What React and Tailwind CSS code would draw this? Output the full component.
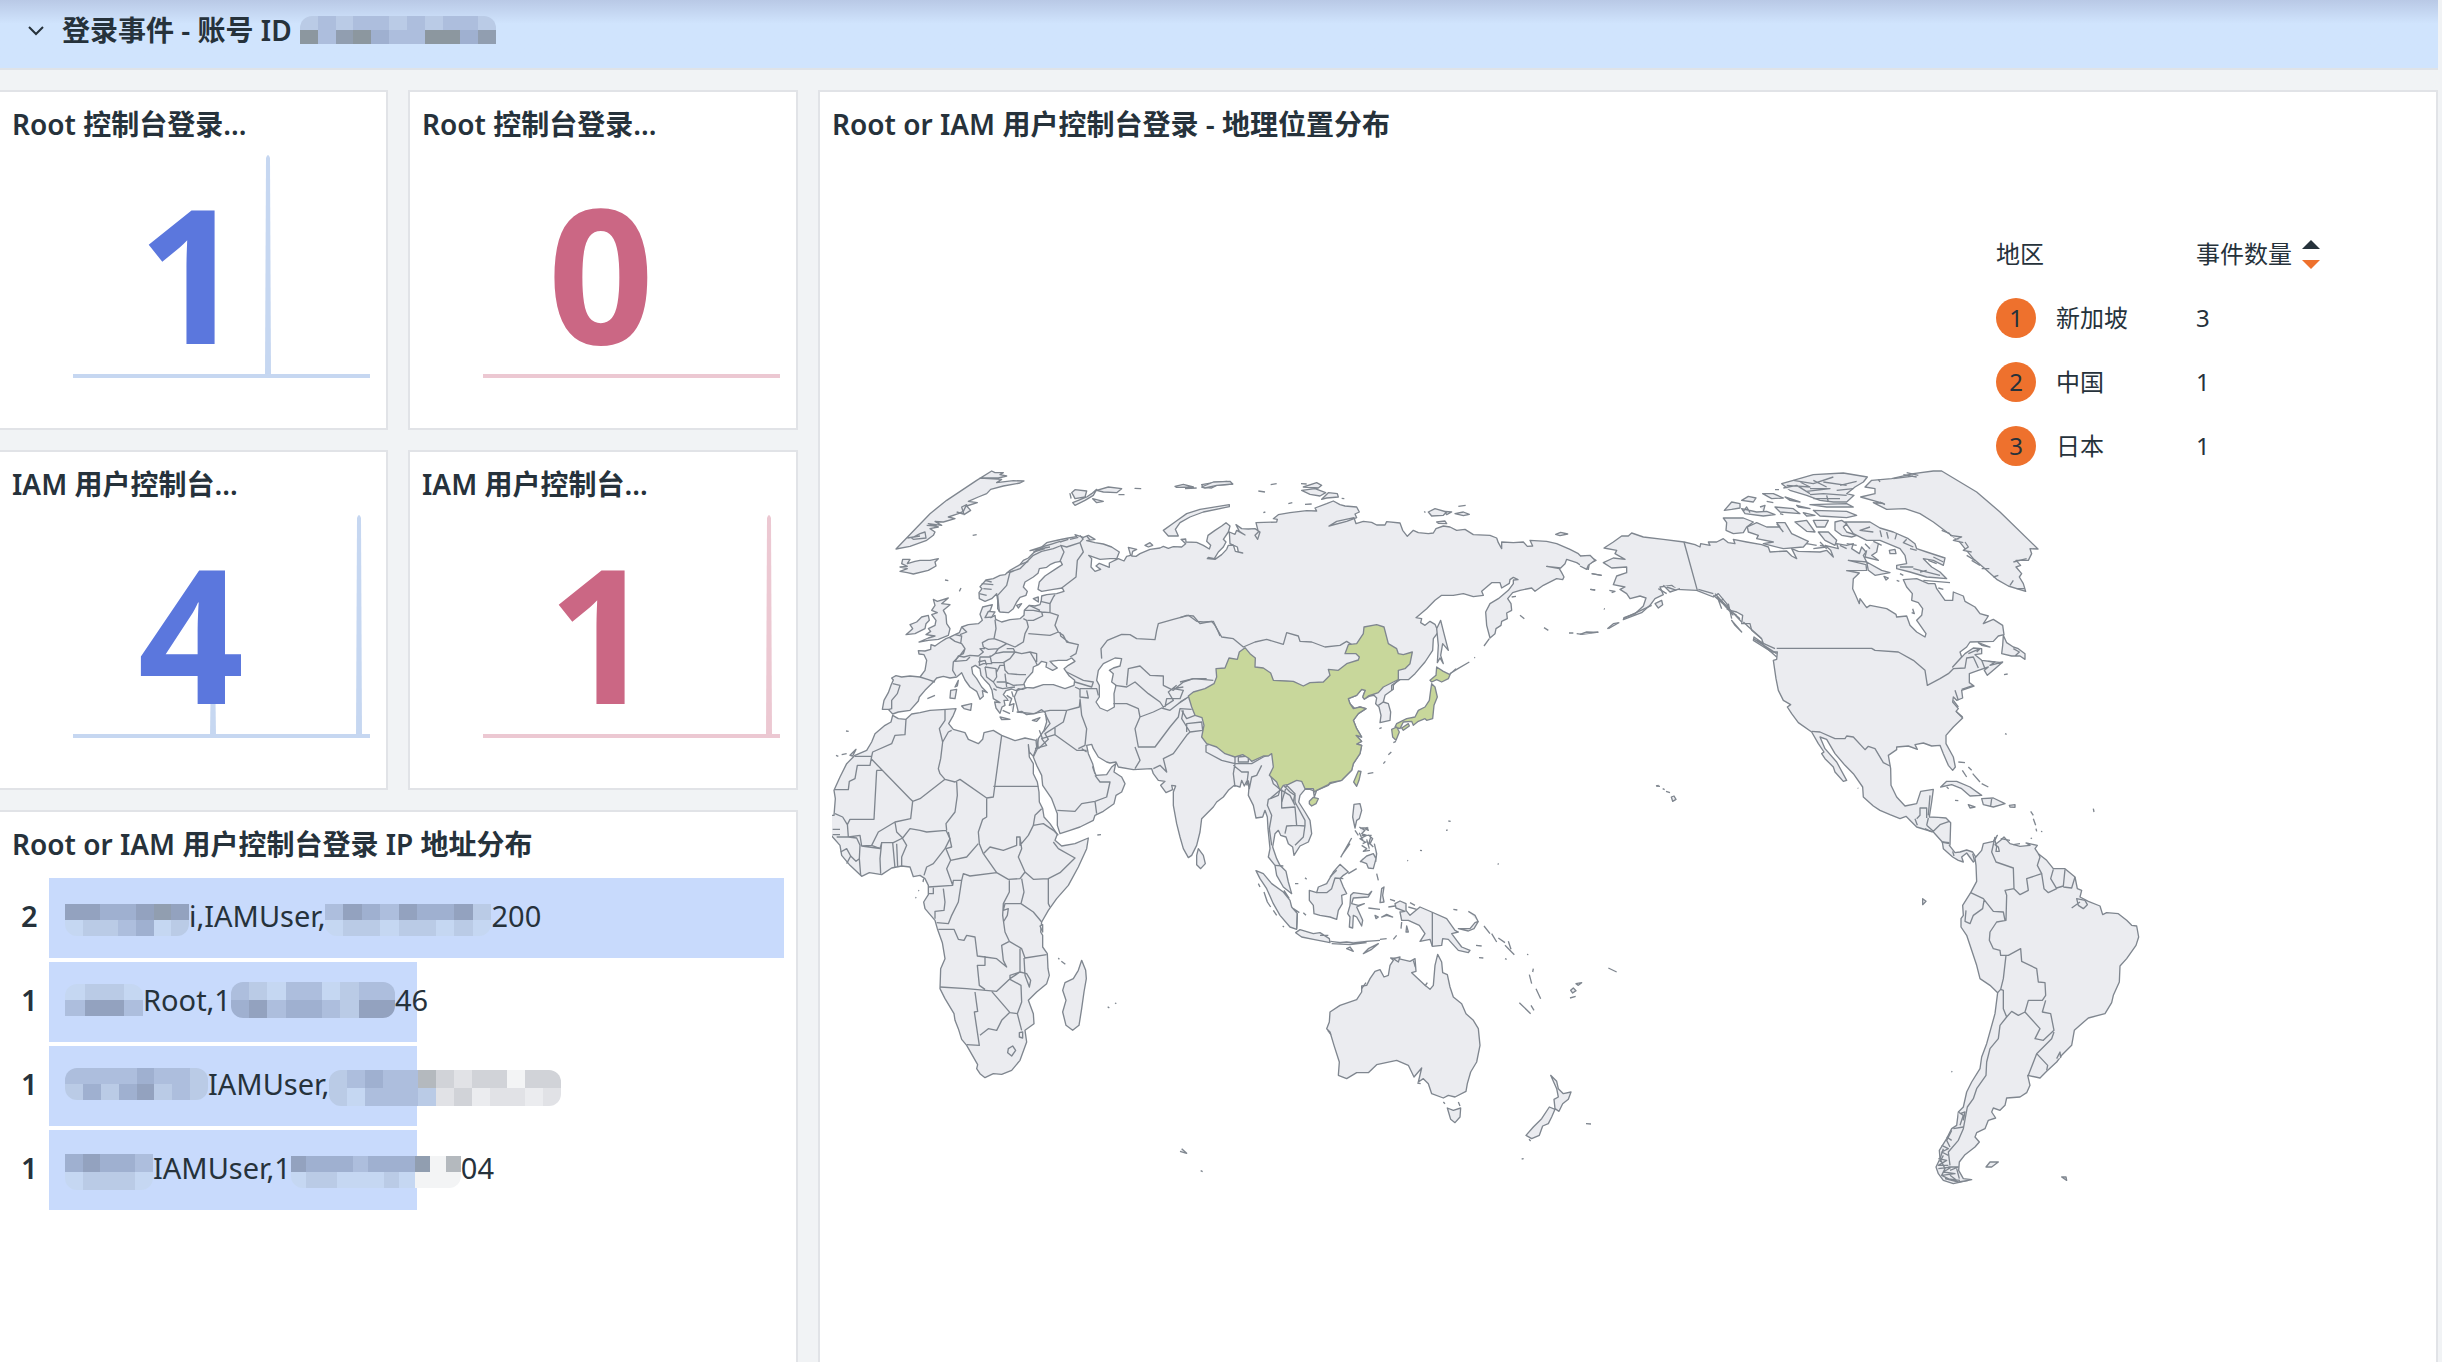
import React from 'react';

const FONT = "font-['Noto_Sans','Noto_Sans_CJK_SC',sans-serif]";

/* ---------- World map data ---------- */

// Map sheets: every sheet keeps its own coordinates, offset from the map's corner
const SHEETS = {
  europe: [0, 0],
  asia: [1080, 0],
  africa: [0, 750],
  oceania: [1080, 750],
  northAmerica: [2280, 0],
  southAmerica: [3180, 990]
};

const at = (sheet, points) => {
  const [dx, dy] = SHEETS[sheet];
  return points
    .split(' ')
    .map(p => {
      const [x, y] = p.split(',').map(Number);
      return `${x + dx},${y + dy}`;
    })
    .join(' ');
};

const EURASIA = [
  at('europe', '187,772 192,745 205,722 213,700 220,684 215,678 228,671 245,675 270,672 300,675 315,655 320,625 312,608 297,606 295,596 315,597 332,592 333,578 345,582 362,570 378,560 388,556 405,548 418,542 425,525 445,518 475,515 487,505 480,487 488,465 517,458 512,472 505,485 512,497 525,490 527,502 545,510 570,503 600,500 612,490 613,475 628,460 645,462 660,458 664,445 665,432 680,428 710,425 732,418 727,408 700,412 665,418 654,412 658,390 675,372 705,352 727,338 722,328 705,331 690,338 680,346 658,350 654,364 640,375 615,390 610,405 622,418 618,430 600,436 590,450 580,470 565,482 540,480 533,470 533,445 530,425 515,440 495,448 478,440 477,422 486,410 480,404 498,384 520,380 540,370 555,368 570,355 600,338 610,325 625,318 640,303 655,292 630,296 665,285 680,272 715,264 745,258 770,254 765,248 790,256 805,250 825,262 800,266 825,272 850,276 875,285 898,300 890,320 870,320 840,322 806,310 815,320 813,345 825,358 842,352 828,342 838,334 868,346 868,333 895,320 912,327 920,313 932,310 925,286 950,292 938,298 935,312 948,313 960,305 990,292 1020,288 1030,283 1045,289 1060,284 1085,285 1097,275 1083,262 1097,261 1098,270 1130,271 1150,280 1168,291'),
  at('asia', '92,280 80,268 84,250 105,235 125,222 138,212 150,222 145,240 130,262 138,270 130,285 115,300 103,320 85,316 82,320 105,322 125,308 140,292 145,280 160,279 166,298 188,303 175,300 172,285 150,275 148,240 165,247 170,235 195,249 178,238 168,218 185,230 205,231 225,230 240,240 233,262 225,250 235,240 228,212 290,210 292,202 280,200 295,188 330,182 380,176 410,177 405,168 440,155 460,147 480,158 495,162 530,165 538,180 525,186 530,197 500,208 447,222 470,208 522,197 528,215 550,208 575,211 590,219 615,219 620,209 660,213 668,235 682,253 700,235 715,242 745,245 760,243 768,230 790,222 810,225 830,235 855,232 880,248 930,250 950,258 955,272 965,290 965,270 1000,272 1030,270 1042,283 1058,282 1050,265 1100,268 1130,275 1170,292 1195,305 1210,320 1225,312 1248,325 1228,335 1225,352 1210,345 1190,332 1160,322 1155,335 1142,348 1100,343 1138,350 1145,362 1152,375 1148,383 1130,380 1090,400 1065,418 1055,408 1020,415 998,422 983,440 993,455 995,475 980,483 982,500 965,508 963,520 948,530 945,545 930,558 920,520 917,480 930,455 955,440 985,415 1000,395 1000,384 1014,383 1000,376 990,383 988,394 965,408 960,392 935,392 905,418 910,430 880,434 850,425 820,430 785,430 765,445 740,470 708,497 725,500 722,512 735,520 750,508 765,517 775,540 760,560 758,595 735,630 705,665 685,683 655,683 640,700 640,712 615,730 610,750 625,755 632,780 630,805 600,812 603,790 597,765 587,755 590,738 582,730 570,732 555,740 550,730 556,715 545,712 530,730 505,740 510,755 525,770 540,765 558,770 535,785 520,805 530,830 545,855 530,850 545,868 530,876 545,880 540,905 520,935 515,955 485,985 450,995 445,1000 410,1015'),
  at('oceania', '403,285 400,266 390,262 375,262 360,280 356,300 375,330 390,355 395,395 385,420 360,432 342,460 338,435 325,425 318,405 302,400 295,385 285,395 278,435 290,470 300,490 318,508 325,540 335,575 310,555 290,520 285,490 265,465 270,440 264,380 262,345 255,325 248,345 228,348 220,310 205,280 207,255 200,238 193,252 185,235 180,255 163,250 145,265 130,285 110,300 100,315 65,350 60,390 50,430 35,460 25,467 10,440 0,405'),
  at('africa', '1070,365 1060,310 1060,270 1067,252 1055,250 1058,263 1038,272 1022,250 1035,238 1015,235 1000,215 995,200 940,203 895,195 888,180 870,183 860,180 835,165 820,140 815,127 800,130 805,155 818,185 825,215 818,195 828,220 860,218 875,195 887,185 882,210 905,225 915,245 905,270 888,280 882,305 850,328 825,340 820,355 780,375 750,385 720,395 712,370 712,335 695,290 668,250 665,220 650,190 640,165 652,140 655,110 672,85 680,60 676,32'),
  at('europe', '665,773 645,785 620,788 605,778 595,780 590,760 583,735 592,715 610,709 620,707 608,712 595,710 588,716 575,711 558,716 550,728 566,745 552,745 555,760 546,765 540,784 528,768 524,750 540,752 520,740 516,715 508,698 495,685 483,670 480,650 466,640 455,646 458,665 470,680 485,705 502,722 487,716 490,733 480,742 470,718 450,705 435,684 425,662 410,675 390,678 370,673 350,678 340,690 315,715 298,735 295,747 270,775 235,780 218,786 205,772')
].join(' ');

const AFRICA = at('africa', '218,40 235,50 258,52 275,36 300,32 330,25 378,22 408,20 400,40 386,65 400,82 435,92 445,112 475,125 488,112 492,92 520,85 545,100 585,116 615,108 648,115 650,135 640,163 628,150 625,128 628,165 640,185 640,215 652,240 657,270 658,300 668,320 672,345 690,365 712,397 705,415 725,432 765,425 805,408 800,440 775,495 745,550 710,590 685,625 665,660 662,690 668,700 668,735 682,755 684,800 688,820 680,845 650,870 625,895 640,935 642,965 615,985 620,1020 600,1075 575,1105 545,1117 520,1115 495,1127 480,1115 470,1100 473,1088 440,1030 425,1012 415,980 405,955 402,935 375,890 360,860 362,800 375,770 367,722 352,680 345,655 315,620 311,600 325,578 325,550 315,530 300,520 280,524 270,495 245,492 215,498 185,518 148,512 125,523 90,490 65,460 60,430 38,405 30,395 30,340 42,340 46,290 42,265 60,225 80,185 105,160 140,145 155,120 165,95 195,70 213,60');

const NORTH_AMERICA = [
  at('northAmerica', '72,288 100,270 125,252 145,252 155,243 190,255 250,262 312,270 345,278 360,285 362,275 390,280 385,270 410,270 430,260 445,272 465,275 460,262 500,270 545,278 565,285 570,300 620,297 635,312 650,320 635,290 655,298 720,300 740,295 760,315 752,295 735,280 775,290 770,275 800,280 820,275 815,290 838,305 845,285 858,300 850,310 860,330 805,325 858,338 860,355 800,356 838,363 820,380 818,410 828,432 838,455 840,440 860,467 870,460 920,470 948,487 950,495 980,492 990,520 1010,540 1035,555 1038,545 1015,512 1010,505 1025,490 1028,470 1015,452 995,445 997,425 980,405 970,383 1010,380 1045,395 1065,395 1070,410 1095,445 1118,445 1120,420 1150,432 1155,448 1185,465 1200,485 1225,492 1210,515 1240,502 1268,520 1272,548 1255,552 1240,568 1170,570 1160,585 1140,600 1145,615 1118,645 1155,605 1180,588 1205,590 1205,605 1185,608 1205,625 1245,630 1230,640 1268,630 1245,650 1222,670 1213,655 1225,645 1195,655 1168,665 1168,692 1182,702 1145,715 1148,738 1130,745 1120,735 1118,750 1135,770 1128,778 1148,798 1120,825 1098,850 1098,875 1120,915 1126,945 1118,955 1105,940 1090,905 1080,880 1055,882 1030,873 1005,878 1012,892 985,882 950,885 950,893 925,910 932,950 933,1000 950,1035 975,1062 1010,1055 1022,1018 1060,1012 1055,1050 1048,1095 1075,1096 1098,1098 1112,1112 1110,1180'),
  at('southAmerica', '208,190 225,212 240,210 260,204 278,210 290,230 280,240 260,213 245,225 250,240 235,235 218,225 190,200 187,180 160,150 110,135 78,103 60,110 30,98 0,85'),
  at('northAmerica', '880,1062 850,1035 848,1005 820,965 795,940 765,905 740,862 720,855 735,890 770,930 800,985 790,988 765,960 760,945 735,920 725,905 732,900 715,875 695,840 655,812 635,785 622,765 632,758 610,745 595,715 588,680 580,625 590,622 592,600 575,600 520,565 522,555 550,575 545,560 515,535 510,515 485,515 488,490 470,480 450,475 440,455 415,425 400,435 350,415 290,412 275,400 240,405 250,428 225,440 210,460 185,482 130,503 132,497 165,485 190,462 198,438 180,432 150,440 140,425 120,412 135,405 100,398 110,372 140,362 140,345 95,348 70,332 100,318 135,322 105,305 110,295')
].join(' ');

const SOUTH_AMERICA = at('southAmerica', '285,228 305,205 310,185 340,178 352,160 345,175 350,195 348,208 358,208 355,195 345,188 362,175 372,165 390,185 420,193 450,190 438,183 472,190 465,200 475,215 500,235 520,260 555,260 585,285 592,320 605,325 600,345 625,358 660,372 668,398 680,392 715,395 740,415 755,430 770,432 776,465 768,490 740,530 720,552 718,600 700,640 695,662 675,695 625,708 600,730 583,745 575,790 545,820 530,840 500,868 480,888 443,880 450,910 440,932 420,945 380,948 375,970 360,985 340,978 335,990 347,1008 325,1015 315,1040 290,1052 285,1065 298,1080 285,1095 255,1118 238,1140 236,1165 250,1190 275,1193 220,1205 190,1195 175,1175 168,1155 180,1130 178,1105 200,1070 215,1040 230,1030 235,990 250,975 260,930 275,900 300,860 305,825 320,785 345,695 353,632 330,610 300,590 290,550 270,490 260,460 243,435 243,410 250,400 248,370 272,332 290,298 288,250');

const CHINA = at('asia', '25,732 40,720 75,710 102,695 110,675 108,650 135,648 147,618 172,622 178,600 195,587 210,605 226,618 225,645 250,648 272,663 280,685 320,687 340,688 370,702 390,692 430,690 450,670 445,652 475,655 500,635 535,624 538,615 528,605 495,605 505,578 530,575 550,545 552,525 590,518 612,525 625,575 650,590 655,605 670,608 697,600 690,635 675,650 655,655 655,683 640,690 610,705 595,722 565,732 553,742 548,735 556,715 545,712 530,730 505,740 510,755 520,770 540,765 558,770 535,785 520,805 530,830 545,855 528,850 545,868 530,876 545,880 540,905 520,935 515,955 485,985 450,992 445,998 410,1015 403,1020 400,1010 375,1010 365,988 350,985 325,997 310,1000 300,1015 290,990 268,970 280,945 275,905 265,912 250,912 215,928 205,918 188,908 165,915 135,905 110,885 80,875 65,855 72,820 66,797 45,790 35,765');

const SEAS = [
  at('europe', '612,695 620,680 638,660 640,645 655,638 665,628 680,632 678,645 698,655 712,648 700,638 690,628 715,625 740,625 755,618 765,628 745,640 732,650 748,672 764,685 762,700 735,710 700,698 670,698 640,708 615,706'),
  at('europe', '835,655 850,635 885,618 905,620 900,642 880,648 868,655 880,665 875,690 888,700 882,725 883,765 862,777 840,768 828,750 838,735 838,700 830,685')
];

// Islands of every sheet
const ISLANDS = {
  europe: [
    // Greenland (east side), Iceland, Svalbard, Novaya Zemlya
    'M228,291 330,185 380,145 470,85 515,57 525,62 550,62 540,68 560,72 535,78 480,78 545,82 530,92 580,86 612,87 600,93 550,102 512,112 500,125 475,135 445,148 472,152 440,162 452,175 432,188 425,165 440,158 430,178 415,185 385,195 405,200 370,210 345,208 365,220 325,215 355,225 330,230 345,240 340,250 320,265 270,283z',
    'M275,258 300,245 315,240 318,258 280,262zM262,258 300,252M410,180 430,186M320,220 350,222',
    'M248,322 270,322 262,335 285,328 300,325 330,325 355,320 345,330 348,342 325,355 280,366 262,362 240,358 262,350 240,345 262,343 245,335z',
    'M755,122 765,113 800,117 795,135 765,140 760,130zM765,160 758,152 775,145 800,135 815,125 830,112 820,130 795,145zM830,115 865,105 905,110 890,122 850,120zM818,140 850,148 830,152zM750,125 753,138zM945,109 962,110zM897,128 912,128z',
    'M1030,235 1065,210 1100,185 1140,172 1228,158 1228,164 1150,180 1110,195 1080,212 1066,232 1075,252 1045,252z',
    'M1065,103 1090,97 1120,105 1070,106zM1095,110 1130,108M1145,98 1180,92 1220,88 1238,96 1190,100 1175,108 1150,106z',
    'M458,250 470,248M375,384 385,386M418,418 423,408M975,280 990,272 998,280 985,285z',
    // Great Britain and Ireland
    'M297,570 325,558 345,552 318,548 332,538 325,530 345,520 348,505 335,488 352,482 335,475 345,460 340,442 352,448 385,438 365,455 390,458 370,475 378,490 380,515 390,530 385,550 355,562 325,565z',
    'M258,548 278,530 270,518 290,510 305,495 325,490 328,505 318,515 315,530 285,545z',
    // Mediterranean and Baltic islands
    'M390,738 392,715 410,712 405,740zM405,705 415,685 412,702zM425,762 455,755 452,775 432,770zM540,795 570,802 545,803zM637,805 660,797 650,808zM322,740 345,730M500,488 505,478 525,480 515,495 495,497zM590,460 605,455 595,468zM640,440 655,435 655,450zM560,730 575,740 568,760 582,755 578,780M548,775 570,785M575,718 580,735',
    'M48,910 55,913M65,908 80,905M90,910 108,892 98,912zM78,837 86,838'
  ],
  asia: [
    'M65,105 100,90 150,88 158,96 110,100 75,108zM235,117 255,120M272,98 290,95M363,95 380,96M370,105 410,92 425,100 415,108zM365,115 405,110 437,122 420,132 390,127zM425,142 445,122 472,125 475,135 440,138zM325,155 337,152M375,157 395,156M250,182 256,180M485,139 493,140',
    'M745,180 765,170 800,180 790,190 755,192zM795,178 815,180 800,188zM825,185 850,180 868,187 850,191zM770,210 795,207 800,215 775,214zM733,178 736,182M835,163 857,160M1127,247 1142,241 1163,246 1140,251z',
    'M782,505 792,545 805,595 788,575 782,610 790,635 780,618 772,632 775,580 770,530zM912,582 928,560M883,618 885,616M810,665 830,652 868,630M808,668 828,650',
    'M995,435 1008,433M1020,490 1033,500M1092,527 1105,535M1190,545 1205,547 1255,540M1282,530 1300,515 1318,512M1232,412 1245,414M1235,365 1265,370M1167,543 1180,543M1272,470 1274,472'
  ],
  africa: [
    'M785,775 797,805 799,830 792,870 785,920 777,970 758,985 738,970 728,930 738,895 728,865 735,842 760,830 775,805zM832,399 843,398M863,914 868,918M885,903 889,905M715,768 718,772M724,778 736,787M660,672 668,668 668,690zM309,540 311,530M295,565 297,567M286,586 289,588'
  ],
  oceania: [
    // Sri Lanka, Sumatra, Java, Borneo, Sulawesi
    'M55,440 70,460 76,485 62,500 50,488 50,460z',
    'M228,506 250,515 275,545 310,570 330,595 335,615 352,635 350,682 330,675 300,640 280,605 260,560 240,530zM235,545 240,555M252,570 262,600 272,615M280,625 290,640M312,565 328,590M340,620 358,632M370,632 378,640M308,672 312,675',
    'M347,692 360,683 400,695 420,692 448,710 450,722 400,712 365,705zM420,700 445,700M452,718 480,722 500,720 520,723 560,718 600,715M455,725 510,728 560,722M500,740 520,748 510,735zM550,755 565,740 595,725 575,742zM600,712 620,710M640,712 650,700',
    'M388,565 410,572 415,555 440,545 460,510 480,487 505,510 490,520 480,530 490,555 500,575 485,580 487,605 475,625 470,652 450,645 420,640 402,635 400,610 388,595z',
    'M512,580 520,572 565,578 575,568 565,585 520,588 515,605 535,610 553,605 530,615 548,655 545,672 530,645 520,640 518,678 508,675 510,645 503,635 510,610z',
    'M482,466 515,408M485,460 510,425M345,545 355,545M375,527 380,532M605,560 612,555 608,580 612,600 600,602zM565,618 600,622M585,640 595,645 588,650zM605,645 620,637 638,645 620,640zM680,672 685,690 678,690zM665,660 663,680M630,592 645,597M625,615 645,612',
    // Philippines
    'M522,307 540,305 545,325 538,350 530,355 525,378 518,345zM525,385 535,400M538,375 555,385 545,395 560,400 540,410 555,420M560,375 565,385 555,380M565,398 578,410 570,425 580,435M545,430 560,440 550,448 570,445M560,412 568,440M560,462 580,455 588,470 580,500 565,498 560,485 542,478zM540,480 550,470M583,425 590,455 587,480M505,515 530,500M590,515 595,535M545,400 575,400M540,378 565,378M548,425 562,418M572,405 565,430M538,392 548,415',
    // New Guinea and Melanesia
    'M645,605 660,597 678,605 678,625 690,640 720,615 755,630 800,650 825,685 835,690 815,695 830,715 845,735 870,745 865,752 835,745 805,712 788,710 785,730 757,733 750,712 720,718 735,695 718,670 685,655 665,655 660,630 675,628 648,618z',
    'M757,630V733M690,602 705,610M685,615 710,622M820,622 832,624M835,680 870,680 885,662 895,658 882,680 865,687zM865,628 885,640 895,660M912,672 930,695M935,695 950,720M955,708 975,722M975,730 1003,758M985,718 993,742M888,730 905,732M897,767 910,768M975,770 980,772',
    'M1048,818 1055,845M1060,800 1058,810M1068,860 1082,890M1018,902 1052,935M1053,910 1062,925M1172,865 1180,858 1188,866 1178,873zM1188,845 1205,842 1195,850zM1170,888 1187,883M1285,798 1310,810M1041,757 1045,758',
    // Australia, Tasmania, New Zealand
    'M773,757 785,780 788,812 802,818 810,855 820,885 845,905 858,935 880,955 895,980 900,1030 890,1080 872,1110 862,1145 858,1168 825,1185 805,1180 790,1188 755,1175 745,1145 730,1130 715,1140 725,1098 702,1125 685,1090 650,1075 590,1088 565,1112 530,1112 500,1130 475,1120 478,1080 462,1030 450,990 440,980 448,960 450,930 480,910 530,893 545,870 545,852 560,850 570,830 585,808 600,803 612,825 625,820 630,790 640,775 632,768 655,770 690,778 705,770 708,808 695,812 735,850 750,862 760,850 765,790z',
    'M712,1143 722,1145M640,770 660,765 655,780zM700,775 706,795M545,860 558,842M443,985 453,998M735,852 742,842M790,1200 795,1205M835,1200 840,1212M802,1218 820,1225 842,1218 840,1245 825,1262 812,1252z',
    'M1112,1120 1130,1138 1135,1160 1150,1175 1173,1170 1165,1192 1148,1205 1137,1228 1125,1220 1122,1192 1135,1185 1130,1160zM1108,1215 1125,1222 1115,1245 1105,1265 1088,1272 1078,1300 1055,1310 1038,1300 1060,1275 1085,1250zM1047,1312 1052,1317M1218,1265 1233,1266M1025,1371 1031,1370M0,1348 20,1354 5,1340M62,1406 68,1409M1430,252 1440,253',
    'M805,357 812,358M798,385 803,384M682,475 684,477M953,485 956,487M720,445 726,446M563,215 580,212M598,80 605,77M610,185 616,178M625,158 634,150M640,122 648,118'
  ],
  northAmerica: [
    // Greenland (west side)
    'M842,135 885,125 885,110 855,105 875,85 935,80 1000,65 1060,57 1085,57 1190,120 1260,180 1374,291 1350,290 1355,305 1345,325 1308,325 1322,340 1308,345 1325,365 1318,375 1330,395 1337,418 1285,402 1250,382 1215,350 1180,320 1155,290 1135,265 1100,240 1060,210 1020,185 975,170 920,172 880,152 912,155z',
    'M940,80 1000,72M970,68 1010,75M980,62 1015,70M895,82 900,90M1085,235 1110,245M1110,250 1145,255 1120,265 1150,272M1155,270 1165,285 1150,295 1175,300M1160,310 1185,325M1175,325 1200,340M1205,350 1228,350M1240,375 1255,370M1300,330 1340,320M1310,410 1335,410M1290,400 1300,385M900,150 915,158',
    // Arctic archipelago
    'M605,95 640,85 700,68 790,63 862,75 850,90 825,105 800,125 822,130 800,150 760,150 720,145 680,130 630,115z',
    'M640,85 700,95 760,75M620,100 690,105 660,90M680,118 750,110 690,110M700,85 740,105M730,90 800,100M690,128 730,125 800,130M740,130 745,150M770,115 820,110M780,100 830,88M610,108 650,100 690,125M700,140 780,140',
    'M548,125 580,125 610,138 575,140zM485,145 505,133 528,138 520,150zM433,175 455,150 480,155 480,168 455,172zM485,170 530,180 560,178 585,188 550,192 495,185zM615,135 660,150 630,145zM690,158 800,155 820,165 740,165zM700,175 800,178 830,190 800,197 720,192zM585,165 640,170 660,185 600,180zM540,165 555,160 550,178M650,160 690,170 655,165zM670,182 705,190 680,192zM560,148 580,152M585,113 597,113M600,185 610,188M490,178 500,165 510,182',
    'M430,198 490,198 520,210 500,225 490,242 460,245 438,235 440,212zM502,225 530,212 560,225 600,225 590,212 615,212 635,245 685,268 670,285 610,290 550,275 580,270 530,260 535,250 505,240zM645,210 680,205 705,240 680,238zM700,205 745,205 735,225 710,225zM715,240 745,240 770,265 765,280 735,265zM680,275 710,280M700,290 740,285 720,280M590,215 610,240M720,270 740,290',
    'M765,210 785,205 800,215 790,225 800,240 830,250 815,255 785,250 765,235zM795,210 870,210 900,228 940,240 985,260 1005,275 1010,290 1040,300 1095,318 1090,340 1060,325 1030,320 1055,345 1080,360 1100,380 1040,375 990,360 950,350 950,340 980,335 975,310 960,290 900,265 860,265 820,245z',
    'M870,225 840,235 880,240M900,235 905,255M920,240 925,260M950,245 945,262M980,262 970,272 1000,285M1010,295 990,290M1060,315 1090,330M1045,325 1070,335M960,345 1000,345M1000,350 1080,370M1040,355 1020,360',
    'M860,330 905,355 930,362 885,370 865,355zM880,268 895,275 890,300 875,310 895,325 855,315 860,295M912,373 925,378 918,384zM950,385 958,388M928,295 945,292 948,305 930,305zM895,275 905,280M855,275 870,290M780,280 800,290M800,275 830,280M998,470 1003,485 995,482M1030,385 1110,392M1075,408 1090,412M960,365 970,370',
    // Newfoundland, Nova Scotia, Vancouver, Alaska
    'M1270,550 1280,572 1300,585 1315,590 1335,605 1335,622 1320,612 1295,612 1265,605 1268,580zM1195,572 1230,585 1205,580zM1225,628 1268,632M1272,668 1283,666M1205,625 1215,650M1275,845 1280,847M1300,590 1318,600 1305,612M1190,600 1200,590 1165,605',
    'M0,312 30,310 45,325 25,340 20,352 0,342M35,365 65,370M30,412 46,414M88,415 105,418 95,422M225,455 245,445 248,458 235,468zM85,530 115,513M0,547 20,540 55,541M72,470 74,471M130,500 215,460M250,400 270,420 300,410M260,405 290,415M235,410 260,425',
    'M400,430 480,500M405,425 485,510M415,440 460,490M430,440 420,450M440,470 470,490M455,505 485,540 465,520zM490,510 545,560M500,520 540,555M520,560 590,605M530,565 585,590M545,575 590,615M355,412 400,425M410,430 425,470M445,455 455,500M1120,745 1135,765M1130,780 1148,795M1125,715 1135,745M1145,712 1180,700',
    // Caribbean and Hawaii
    'M1082,1005 1100,988 1130,988 1170,1005 1205,1030 1170,1032 1145,1010 1115,998zM1165,1058 1185,1065 1170,1068zM1205,1040 1240,1038 1275,1055 1240,1065 1210,1058zM1235,1040 1232,1062M1288,1060 1305,1058 1305,1066 1290,1065zM1135,930 1155,932M1147,955 1160,975M1165,945 1175,955M1178,965 1200,990M1205,995 1225,1005M1100,1005 1106,1010M1125,1045 1135,1046M1352,1078 1360,1090M1360,1100 1367,1120M1368,1130 1370,1138M1383,1138 1387,1139M1352,1160 1356,1158M1262,1160 1290,1165',
    'M228,1002 236,1000M248,1010 254,1013M258,1018 270,1022M274,1035 282,1032 288,1042 278,1048zM833,1008 835,1009'
  ],
  southAmerica: [
    'M128,350 128,368 138,358zM318,1155 330,1140 355,1140 335,1155zM545,1185 560,1195 558,1185zM214,868 217,870M590,350 615,355 622,368 610,380 595,370zM575,378 600,360M400,188 420,185M640,80 642,90',
    'M235,990 250,1000 240,1030M220,1040 250,1035M200,1065 215,1075M185,1090 205,1100 185,1110 205,1120M175,1130 200,1135 175,1150 205,1150M175,1160 215,1155 190,1170 225,1175 185,1180M200,1190 240,1195M205,1155 235,1155 210,1165M190,1100 180,1130 195,1160 185,1180 215,1195M180,1140 190,1120M215,1045 200,1075 210,1095M195,1190 235,1200 265,1195M230,1160 238,1190M210,1180 230,1195M240,995 255,990 250,1015M530,830 540,810 542,828'
  ]
};

const GREEN_ISLANDS = {
  asia: 'M770,645 790,658 810,668 805,680 785,690 770,683 755,690 750,685 768,670zM755,695 765,705 772,735 762,760 758,800 740,805 735,800 715,808 700,820 695,808 670,810 660,830 645,825 650,815 680,800 705,795 715,775 735,765 748,745 752,715zM635,832 650,825 658,840 648,865 638,855zM665,828 685,815 688,822 670,835zM535,957 543,958 537,985 530,1003 521,990zM388,1048 400,1036 415,1040 408,1055 395,1062 388,1055z',
};

// Borders drawn over the landmasses
const BORDERS = {
  europe: [
    'M218,695 240,700 232,725 215,745 215,770 205,773M300,675 325,683 345,690M388,556 405,568 425,575 435,590 420,610 400,630 398,655 408,672M405,548 425,552 422,575M425,525 440,540 420,548M435,590 430,605 415,612 432,615 450,610 475,612 490,600 480,590 495,590',
    'M525,503 528,530 522,560 505,562 487,572 490,585 505,592 535,590 560,575 545,568 522,560M560,575 585,585 610,570 615,545 625,525 620,505 610,500M535,590 525,605 510,615 480,615 478,640 490,635 515,635 510,610M525,605 550,600 585,600 580,590 560,590M585,600 570,620 550,632 515,632M415,612 405,628 440,625 450,615M585,600 605,605 630,600 645,625 652,640M630,600 650,605 650,630M552,632 555,655 565,665 600,668 618,668M555,665 558,690 580,700 612,698M495,645 528,650 530,675 520,690 500,675 495,645M530,660 540,640 555,640M530,690 558,690 560,705M520,690 530,705 548,710 585,705M520,710 530,715M475,630 495,625 500,640',
    'M625,545 690,550 715,540 705,520 715,490 690,482 665,480 668,492 640,505 622,505M615,475 640,475 665,480M690,482 690,455 700,435 705,428M690,455 662,448M628,460 660,475M715,540 730,550 740,570 775,578 768,605 750,615M720,540 722,552 745,570M538,480 533,430 560,400 570,360 600,350 640,310 665,298 700,290 720,282M720,328 732,300 722,280 740,285 780,272 790,260M780,272 790,300 772,325 768,375 725,408',
    // Norwegian fjords
    'M485,395 520,398M490,410 515,412M478,425 500,430M495,385 515,390M560,362 580,358M600,338 625,328M640,300 675,290M650,292 690,285M665,285 700,275M690,278 720,268M720,270 745,262M750,262 775,256M780,250 790,262M800,252 810,264',
    'M845,620 843,590 862,565 905,547 930,548 950,560 1005,563 1010,535 1015,515 1060,502 1105,490 1130,508 1150,510 1180,508 1195,540 1200,552M740,660 790,685 820,690 815,705 765,690M780,710 830,710 835,730M765,705 780,712 780,735 805,738 800,715M590,780 640,785 690,775 740,775 778,765 780,745M920,700 925,650 960,642 990,670 1030,672 1030,700 1060,715 1090,690 1120,680 1180,685M885,700 920,705 945,690 985,725 1020,750 1030,765 1060,745 1045,720 1070,700M880,755 920,755 955,770 960,795 1000,780 1025,768 1050,775 1075,755 1105,735M1035,765 1040,740 1080,740 1090,715 1060,710 1090,705M960,795 945,830 955,885 1005,885 1050,825 1075,795 1080,770 1115,772M945,885 960,925 945,950M1000,950 1020,940 1040,960 1030,920 1060,905 1100,850 1110,840 1085,800 1090,775M1110,840 1148,835 1145,810 1100,815 1100,840M780,740 785,790 800,830 795,880 775,890M740,775 730,810 675,845 685,862 655,890M705,828 705,848 770,895 800,895M675,785 690,815 670,840M658,835 668,862M650,860 655,888'
  ],
  asia: [
    'M0,497 20,490 40,492 60,515 95,508 105,520 125,555 160,560 190,585 225,570 260,562 310,577 320,542 355,552 360,568 395,570 435,585 480,580 500,568 515,578M80,680 40,680 0,690M20,738 0,750M5,775 20,800 45,790M78,880 95,875 165,915 165,935 125,925 78,900zM175,915 205,912 205,930 175,930zM165,935 215,935 250,915 275,905M160,940 185,960 205,960 200,1000M165,935 160,965 165,1005M245,940 230,970 215,975 208,1010 205,985M300,1015 270,1040M320,1000 305,1050M660,683 635,700 635,715M610,750 595,760M310,1000 330,1020 345,1030 345,1050'
  ],
  africa: [
    'M105,163 155,163 150,190 112,190 105,230 88,238 85,263 42,263M155,163 158,150 215,125 225,100 255,98 258,52M155,172 270,290 278,298 300,290 375,232 405,240 420,232 500,288 520,285 545,100M375,22 375,55 358,80 368,120 362,170 355,200 360,215 375,232M368,120 385,90 395,85M520,253H655M170,205H185M170,205 162,352 90,352 82,368 68,345 45,335M278,298 272,350 225,360 175,390 155,430 125,432 120,400 85,405 82,365M410,240 412,280 405,330 378,365 380,385M500,290 500,345 488,352 475,390 478,425 490,455M225,360 230,390 248,408 270,380 300,385 320,390 378,385 390,410 375,440 340,485 320,495 312,520M155,430 180,440 185,422 220,422 248,408M185,422 180,470 182,515M218,422 225,498M230,425 233,495M248,410 260,430 245,465 245,495M50,405 85,405 110,408 120,430 118,470 108,478 92,462 80,440 62,450M118,470 122,520M92,462 80,485M125,432 180,440',
    'M385,390 395,435 378,440 392,475 440,465 475,425M392,475 380,500 398,550 325,555M398,550 400,535 425,535 430,515 450,522 530,512 490,455M490,455 510,435 550,445 590,430 590,405 600,405 600,430 625,400 640,370 670,365 700,385 715,400M600,405 605,440 595,465 615,510 600,530 565,532 530,512M615,510 640,532 685,530 720,512 765,468 715,440 700,420M685,530V605L690,615M665,320 645,340 640,370M605,530 612,570 603,605H555L550,625 565,620 562,640 550,660M603,605 640,630 665,660M568,535 568,570 550,605 548,640 555,690 568,718M568,718 605,740 615,768 680,758M568,718 545,730 550,775 560,795 530,770 495,765 472,762 465,705 440,700 432,715 415,712 402,682 355,682M495,762V790H472L478,850 495,862M360,855 440,860 530,868 570,830 600,810 600,740M570,830 570,820 600,810 620,815 632,835 628,855 615,820 612,768M570,832 603,850 605,900 592,935 570,932 515,868M465,870 473,928 463,930 478,1030 440,1028M480,1000 505,980 530,985 545,955 568,932M592,935 605,985M598,992 608,990 608,1008 598,1005zM565,1040 578,1032 587,1045 575,1062 563,1052zM325,575H340V557M370,560 375,600 372,625 345,628 345,650M425,535 415,600 395,640 385,665 350,662',
    'M712,325 765,328 785,305 825,298 860,285 870,240 840,240 825,220M825,298 830,335M645,140 680,130 665,110 705,98M785,140 800,150M38,382H60M38,398H60'
  ],
  oceania: [
    'M270,215 280,245 300,262 295,280 265,292 262,310 275,340 268,380 275,430M305,262 305,318 345,315 350,370 320,372 315,395M300,262 330,280 345,310M345,300 375,355 375,372 350,370M375,370 370,405 345,430M320,250 345,275 340,300M285,490 310,492M410,572 440,572 455,560 465,528 490,530M352,635 350,680M450,525 470,505'
  ],
  northAmerica: [
    'M312,270 352,415M590,589H875L885,595 955,600 1000,625 1035,655 1042,700 1080,680 1105,665 1120,650 1155,648 1160,618 1180,615 1195,648M695,838 720,840 765,860 795,860 800,852 820,855 855,893 865,883 885,890 910,932 930,942M1010,1100 1020,1090 1020,1068 1040,1068 1040,1098M1050,1030 1045,1090M1045,1098 1040,1120M1040,1120 1060,1138 1080,1118 1108,1108M1035,1130 1055,1140M1085,1170 1108,1175M1005,1100 1012,1120'
  ],
  southAmerica: [
    'M345,165 335,210 348,240 400,258 402,320 375,325 380,340 378,415 350,420 330,450 328,475 340,500 360,505 362,520 385,520 422,500 425,538 470,560 475,600 495,602 497,640 487,655 445,655 435,690 415,700 395,688 380,705 370,680 370,625 362,622 353,632M402,320 420,338 445,325 440,290 485,275 472,250 480,225 475,215M485,275 492,320 505,332 530,320 512,290 520,262M530,318 550,312 555,262M550,315 575,318 585,285M272,332 310,350 340,388 370,390 375,415M312,355 308,380 280,400 270,425 255,418 258,385M378,520 370,590 362,622M380,705 360,730 355,770 330,800 320,840 318,880 290,920 280,950 262,975 250,1040 235,1075 205,1110 210,1150M497,655 487,690 512,695 522,745 490,775 465,770 480,740 435,690M522,750 515,770 470,815 445,880M470,815 503,850 500,865M188,180 208,182M218,208 222,222M278,215 283,235'
  ]
};

function WorldMap() {
  const groups = (data, render) =>
    Object.entries(data).map(([sheet, shapes]) => (
      <g key={sheet} transform={`translate(${SHEETS[sheet].join(' ')})`}>
        {[].concat(shapes).map((d, i) => render(d, i))}
      </g>
    ));

  return (
    <svg
      viewBox="36 36 4776 2340"
      className="block w-full fill-[#ebecf0] stroke-[#7f868f] stroke-4"
      strokeLinejoin="round"
      role="img"
      aria-label="地理位置分布"
    >
      <polygon points={AFRICA} />
      <polygon points={EURASIA} />
      <polygon points={NORTH_AMERICA} />
      <polygon points={SOUTH_AMERICA} />
      {groups(ISLANDS, (d, i) => <path key={i} d={d} />)}
      {SEAS.map(points => (
        <polygon key={points} points={points} className="fill-white" />
      ))}
      {groups(BORDERS, (d, i) => <path key={i} d={d} className="fill-none" />)}
      <polygon points={CHINA} className="fill-[#c8d79b]" />
      {groups(GREEN_ISLANDS, (d, i) => <path key={i} d={d} className="fill-[#c8d79b]" />)}
    </svg>
  );
}

/* ---------- Masked text ---------- */

// One letter per cell, from light to dark, on blue or on white
const SHADES = {
  a: '#c5d7f2',
  b: '#bacbe6',
  c: '#adbedd',
  d: '#9fb0d0',
  e: '#93a2bf',
  f: '#919eb0',
  g: '#8c979f',
  u: '#f3f4f5',
  v: '#ebecef',
  w: '#e1e2e6',
  x: '#d1d3d8',
  y: '#b4b9be'
};

function Mosaic({ rows, className }) {
  const columns = rows[0].length;
  return (
    <svg
      viewBox={`0 0 ${columns} ${rows.length}`}
      preserveAspectRatio="none"
      shapeRendering="crispEdges"
      aria-hidden="true"
      className={`shrink-0 ${className}`}
    >
      {rows.flatMap((row, y) =>
        [...row].map((cell, x) => (
          <rect key={`${x}-${y}`} x={x} y={y} width="1" height="1" fill={SHADES[cell]} />
        ))
      )}
    </svg>
  );
}

/* ---------- Cards ---------- */

function Card({ title, className, children }) {
  return (
    <section className={`min-w-0 border-2 border-[#e1e3e7] bg-white pt-3.5 ${className}`}>
      <h2 className="truncate px-3 text-[28px] leading-9 font-semibold">{title}</h2>
      {children}
    </section>
  );
}

function Stat({ title, value, color, lineColor, spikes = [] }) {
  return (
    <Card title={title} className="col-span-2">
      <div className="mt-2.5 grid">
        <svg viewBox="0 0 386 228" className={`col-start-1 row-start-1 w-full ${lineColor}`} aria-hidden="true">
          <rect x="73" y="222" width="297" height="4" />
          {spikes.map(({ x, top }) => (
            <path key={x} d={`M${x - 3},224L${x - 2},${top + 4}Q${x},${top - 2} ${x + 2},${top + 4}L${x + 3},224z`} />
          ))}
        </svg>
        <div className={`col-start-1 row-start-1 mt-3 self-center pr-1 text-center text-[186px] leading-none font-bold ${color}`}>
          {value}
        </div>
      </div>
    </Card>
  );
}

const ADDRESSES = [
  {
    count: 2,
    width: 'w-full',
    parts: [
      <Mosaic key="a" rows={['eeddefe', 'abbcdab']} className="mt-2 h-8 w-[124px] rounded-b-xl" />,
      'i,IAMUser,',
      <Mosaic key="b" rows={['cedceddeb', 'abbabbaba']} className="mt-2 h-8 w-[166px] rounded-b-xl" />,
      '200'
    ]
  },
  {
    count: 1,
    width: 'w-1/2',
    parts: [
      <Mosaic key="a" rows={['abba', 'ceec']} className="h-8 w-[78px] rounded-t-xl" />,
      'Root,1',
      <Mosaic key="b" rows={['cbaccabcc', 'decddcbee']} className="h-9 w-[164px] rounded-xl" />,
      '46'
    ]
  },
  {
    count: 1,
    width: 'w-1/2',
    parts: [
      <Mosaic key="a" rows={['ccccdccb', 'bdbdebcb']} className="h-8 w-[143px] rounded-xl" />,
      'IAMUser,',
      <Mosaic key="b" rows={['bcdccyxwxxuxx', 'bacccbwxvwwvw']} className="mt-2 h-9 w-[232px] rounded-xl" />
    ]
  },
  {
    count: 1,
    width: 'w-1/2',
    parts: [
      <Mosaic key="a" rows={['deddc', 'abbba']} className="mt-2 h-9 w-[88px] rounded-b-xl" />,
      'IAMUser,1',
      <Mosaic key="b" rows={['edddcdddfuy', 'abbaaabauuu']} className="mt-2 h-8 w-[170px] rounded-b-xl" />,
      '04'
    ]
  }
];

const REGIONS = [
  { name: '新加坡', count: 3 },
  { name: '中国', count: 1 },
  { name: '日本', count: 1 }
];

export default function App() {
  return (
    <div className={`flex min-h-screen flex-col overflow-hidden bg-[#f1f3f5] text-[#26323b] ${FONT}`}>
      <header className="mr-1 flex h-[70px] items-center border-b-2 border-[#dfe3e8] bg-linear-to-b from-[#b9c9e6] to-[#d0e4fd] to-35% pb-2 pl-6">
        <button type="button" className="flex items-center gap-4 text-[28px] leading-9 font-semibold">
          <svg viewBox="0 0 22 22" className="size-[22px] fill-none stroke-current stroke-2" aria-hidden="true">
            <path d="M5 8l7 7 7-7" />
          </svg>
          登录事件 - 账号 ID
        </button>
        <Mosaic rows={['bcbccbcbccb', 'gcfgdccggdf']} className="ml-2 h-7 w-[196px] rounded-t-xl" />
      </header>

      <main className="mt-5 mr-1 -ml-0.5 grid flex-1 grid-cols-12 grid-rows-[340px_340px_1fr] gap-5">
        <Stat
          title="Root 控制台登录..."
          value={1}
          color="text-[#5b77dd]"
          lineColor="fill-[#c6d7f1]"
          spikes={[{ x: 268, top: 2 }]}
        />
        <Stat title="Root 控制台登录..." value={0} color="text-[#cb6784]" lineColor="fill-[#ecc8d2]" />

        <Card title="Root or IAM 用户控制台登录 - 地理位置分布" className="col-span-8 row-span-3 border-b-0">
          <table className="mt-20 mr-10 ml-auto w-[400px] table-fixed text-left text-2xl">
            <thead>
              <tr className="h-16">
                <th className="font-normal">地区</th>
                <th className="font-normal" aria-sort="descending">
                  <button type="button" className="flex items-center gap-2.5">
                    事件数量
                    <svg viewBox="0 0 18 30" className="h-[30px] w-[18px]" aria-hidden="true">
                      <path d="M0 10L9 1l9 9z" className="fill-[#26323b]" />
                      <path d="M0 21h18l-9 9z" className="fill-[#ee712d]" />
                    </svg>
                  </button>
                </th>
              </tr>
            </thead>
            <tbody>
              {REGIONS.map((region, i) => (
                <tr key={region.name} className="h-16">
                  <td>
                    <div className="flex items-center gap-5">
                      <span className="flex size-10 items-center justify-center rounded-full bg-[#ee712d]">{i + 1}</span>
                      {region.name}
                    </div>
                  </td>
                  <td>{region.count}</td>
                </tr>
              ))}
            </tbody>
          </table>
          <div className="-mt-3.5 px-3">
            <WorldMap />
          </div>
        </Card>

        <Stat
          title="IAM 用户控制台..."
          value={4}
          color="text-[#5b77dd]"
          lineColor="fill-[#c6d7f1]"
          spikes={[{ x: 213, top: 150 }, { x: 359, top: 2 }]}
        />
        <Stat
          title="IAM 用户控制台..."
          value={1}
          color="text-[#cb6784]"
          lineColor="fill-[#ecc8d2]"
          spikes={[{ x: 359, top: 2 }]}
        />

        <Card title="Root or IAM 用户控制台登录 IP 地址分布" className="col-span-4 border-b-0">
          <ul className="mt-4 flex flex-col gap-1 pr-3 text-[29px]">
            {ADDRESSES.map((row, i) => (
              <li key={i} className="flex h-20 items-center">
                <span className="w-[49px] shrink-0 pb-1 pl-[21px] font-semibold">{row.count}</span>
                <div className="grid h-full flex-1 items-center">
                  <div className={`col-start-1 row-start-1 h-full bg-[#c8dafc] ${row.width}`} />
                  <div className="col-start-1 row-start-1 flex items-center pb-1 pl-4 whitespace-nowrap">
                    {row.parts}
                  </div>
                </div>
              </li>
            ))}
          </ul>
        </Card>
      </main>
    </div>
  );
}
